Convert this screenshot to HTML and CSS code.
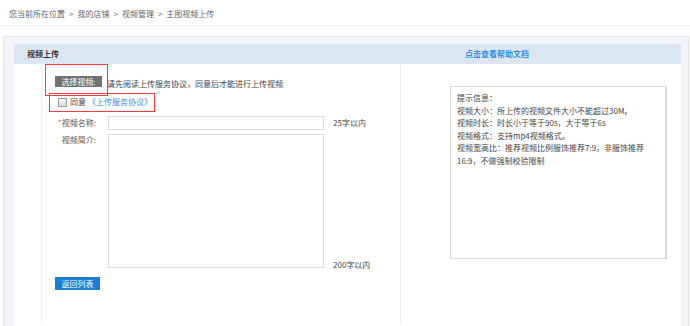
FILE: index.html
```html
<!DOCTYPE html>
<html lang="zh-CN">
<head>
    <meta charset="UTF-8">
    <title>主图视频上传</title>
    <link rel="stylesheet" href="styles.css">
</head>
<body>

    <!-- Breadcrumb -->
    <div class="crumb">
        您当前所在位置<span class="sep">&gt;</span>我的店铺<span class="sep">&gt;</span>视频管理<span class="sep">&gt;</span>主图视频上传
    </div>

    <div class="outer">
        <div class="panel">
            <div class="panel-head">
                <div class="head-left">视频上传</div>
                <div class="head-right"><a href="#">点击查看帮助文档</a></div>
            </div>

            <div class="panel-body">
                <div class="col-left">
                    <div class="upload-form">
                        <div class="row-choose">
                            <span class="btn-gray">选择视频:</span>
                            <span class="tip">请先阅读上传服务协议，同意后才能进行上传视频</span>
                        </div>

                        <div class="row-agree">
                            <span class="check"></span>
                            <span>同意</span>
                            <a href="#" class="agree-link">《上传服务协议》</a>
                        </div>

                        <div class="field">
                            <label class="field-label"><em>*</em>视频名称:</label>
                            <div class="text-input"></div>
                            <span class="note">25字以内</span>
                        </div>

                        <div class="field field-area">
                            <label class="field-label">视频简介:</label>
                            <div class="text-area"></div>
                            <span class="note note-bottom">200字以内</span>
                        </div>

                        <a href="#" class="btn-blue">返回列表</a>

                        <!-- red highlight marks -->
                        <div class="mark mark-choose"></div>
                        <div class="mark mark-agree"></div>
                    </div>
                </div>

                <div class="col-right">
                    <div class="help-box">
                        提示信息：<br>
                        视频大小：所上传的视频文件大小不能超过30M。<br>
                        视频时长：时长小于等于90s，大于等于6s<br>
                        视频格式：支持mp4视频格式。<br>
                        视频宽高比：推荐视频比例服饰推荐7:9，非服饰推荐16:9，不做强制校验限制
                    </div>
                </div>
            </div>
        </div>
    </div>

</body>
</html>
```

FILE: styles.css
```css
/* General Reset */
* {
    margin: 0;
    padding: 0;
    box-sizing: border-box;
}

body {
    font-family: "Noto Sans CJK SC", "Liberation Sans", sans-serif;
    font-size: 8px;
    line-height: 10px;
    color: #444;
    background: #fff;
    overflow: hidden;
}

a {
    text-decoration: none;
}

/* Breadcrumb */
.crumb {
    height: 26px;
    padding: 9px 0 0 9px;
    color: #666;
    border-bottom: 1px solid #eeeff2;
}

.crumb .sep {
    margin: 0 4px;
}

/* Outer gray box */
.outer {
    margin: 10px 1px 0 3px;
    padding: 7px 7px 0 10px;
    background-color: #f3f4f9;
    border: 1px solid #e4e6ec;
    border-bottom: none;
    height: 300px;
}

.panel {
    background-color: #fff;
    height: 100%;
}

/* Header bar */
.panel-head {
    display: flex;
    height: 20px;
    background-color: #dce6f0;
    line-height: 20px;
    font-weight: bold;
}

.head-left {
    width: 386px;
    padding-left: 13px;
    color: #333;
}

.head-right {
    padding-left: 65px;
}

.head-right a {
    color: #2f8fe6;
}

/* Body columns */
.panel-body {
    display: flex;
    height: 260px;
}

.col-left {
    width: 387px;
    padding-left: 27px;
    border-right: 1px solid #ebebeb;
}

.col-right {
    flex: 1;
    padding: 22px 0 0 49px;
}

/* Upload form */
.upload-form {
    position: relative;
    height: 100%;
    border-left: 1px solid #eeeeee;
    padding: 12px 0 0 13px;
}

/* red highlight marks, drawn over the form */
.mark {
    position: absolute;
    z-index: 2;
    box-shadow: inset 0 0 0 1px #f03c3f;
}

.mark-choose {
    left: 3px;
    top: 0;
    width: 63px;
    height: 32px;
}

.mark-agree {
    left: 7px;
    top: 29px;
    width: 106px;
    height: 19px;
}

.row-choose {
    display: flex;
    align-items: flex-end;
    height: 11px;
}

.btn-gray {
    display: block;
    width: 47px;
    height: 11px;
    line-height: 11px;
    text-align: center;
    color: #fff;
    background-color: #717171;
}

.tip {
    margin-left: 5px;
    margin-bottom: -2px;
    color: #444;
}

.row-agree {
    display: flex;
    align-items: center;
    margin-top: 10px;
    padding-left: 3px;
    height: 10px;
}

.check {
    width: 9px;
    height: 9px;
    margin-right: 3px;
    border: 1px solid #9a9a9a;
    background: linear-gradient(#f2f2f2, #dcdcdc);
}

.agree-link {
    margin-left: 2px;
    color: #3a8ee6;
}

/* Fields */
.field {
    display: flex;
    align-items: center;
    margin-top: 9px;
}

.field-label {
    width: 41px;
    text-align: right;
    color: #555;
}

.field-label em {
    font-style: normal;
    color: #e8484b;
}

.text-input {
    width: 216px;
    height: 14px;
    margin-left: 12px;
    border: 1px solid #dddddd;
}

.note {
    margin-left: 9px;
    color: #444;
}

.field-area {
    align-items: flex-start;
    margin-top: 4px;
}

.field-area .field-label {
    margin-top: 1px;
}

.text-area {
    width: 216px;
    height: 134px;
    margin-left: 12px;
    border: 1px solid #dddddd;
}

.note-bottom {
    align-self: flex-end;
    margin-bottom: -2px;
}

.btn-blue {
    display: block;
    width: 45px;
    height: 13px;
    margin-top: 9px;
    line-height: 13px;
    text-align: center;
    color: #fff;
    background-color: #1c7ed2;
}

/* Help box */
.help-box {
    width: 217px;
    height: 173px;
    padding: 5px 6px;
    line-height: 12.5px;
    color: #444;
    border: 1px solid #dadada;
    border-right-width: 2px;
}
```
